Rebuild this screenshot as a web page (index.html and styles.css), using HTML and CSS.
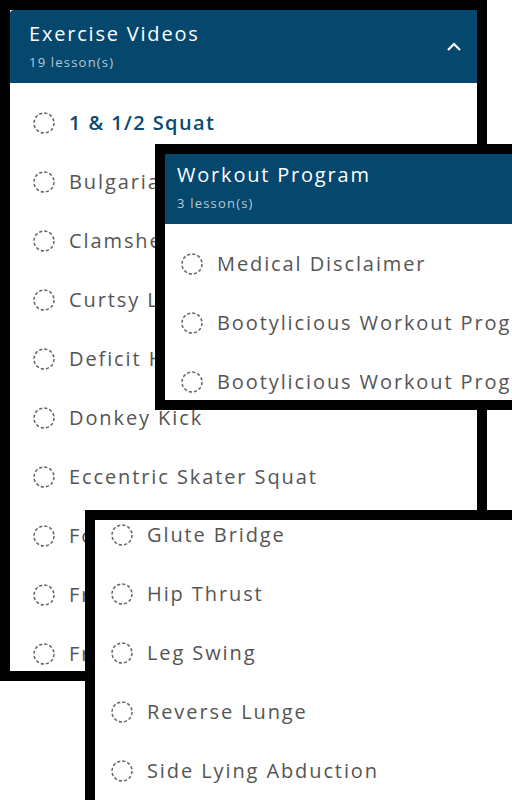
FILE: index.html
```html
<!DOCTYPE html>
<html lang="en">
<head>
    <meta charset="UTF-8">
    <meta name="viewport" content="width=device-width, initial-scale=1.0">
    <title>Course Lessons</title>
    <link rel="stylesheet" href="styles.css">
</head>
<body>
    <div class="desk">
        <!-- first capture: the exercise videos section -->
        <section class="shot shot-videos">
            <div class="course">
                <div class="course-head">
                    <div>
                        <h2>Exercise Videos</h2>
                        <p>19 lesson(s)</p>
                    </div>
                    <svg class="chevron" width="16" height="10" viewBox="0 0 16 10">
                        <path d="M2 8 L8 2 L14 8" fill="none" stroke="#fff" stroke-width="2.2"/>
                    </svg>
                </div>
                <ul class="lessons">
                    <li class="current"><svg class="dot" viewBox="0 0 22 22"><circle cx="11" cy="11" r="10"/></svg>1 &amp; 1/2 Squat</li>
                    <li><svg class="dot" viewBox="0 0 22 22"><circle cx="11" cy="11" r="10"/></svg>Bulgarian Split Squat</li>
                    <li><svg class="dot" viewBox="0 0 22 22"><circle cx="11" cy="11" r="10"/></svg>Clamshell</li>
                    <li><svg class="dot" viewBox="0 0 22 22"><circle cx="11" cy="11" r="10"/></svg>Curtsy Lunge</li>
                    <li><svg class="dot" viewBox="0 0 22 22"><circle cx="11" cy="11" r="10"/></svg>Deficit Hip Thrust</li>
                    <li><svg class="dot" viewBox="0 0 22 22"><circle cx="11" cy="11" r="10"/></svg>Donkey Kick</li>
                    <li><svg class="dot" viewBox="0 0 22 22"><circle cx="11" cy="11" r="10"/></svg>Eccentric Skater Squat</li>
                    <li><svg class="dot" viewBox="0 0 22 22"><circle cx="11" cy="11" r="10"/></svg>Foot Elevated Bridge</li>
                    <li><svg class="dot" viewBox="0 0 22 22"><circle cx="11" cy="11" r="10"/></svg>Frog Pump</li>
                    <li><svg class="dot" viewBox="0 0 22 22"><circle cx="11" cy="11" r="10"/></svg>Frog Squat</li>
                </ul>
            </div>
        </section>

        <!-- second capture: workout program section -->
        <section class="shot shot-program">
            <div class="course">
                <div class="course-head">
                    <div>
                        <h2>Workout Program</h2>
                        <p>3 lesson(s)</p>
                    </div>
                </div>
                <ul class="lessons">
                    <li><svg class="dot" viewBox="0 0 22 22"><circle cx="11" cy="11" r="10"/></svg>Medical Disclaimer</li>
                    <li><svg class="dot" viewBox="0 0 22 22"><circle cx="11" cy="11" r="10"/></svg>Bootylicious Workout Program</li>
                    <li><svg class="dot" viewBox="0 0 22 22"><circle cx="11" cy="11" r="10"/></svg>Bootylicious Workout Program</li>
                </ul>
            </div>
        </section>

        <!-- third capture: rest of the exercise list, scrolled -->
        <section class="shot shot-more">
            <div class="course">
                <ul class="lessons">
                    <li><svg class="dot" viewBox="0 0 22 22"><circle cx="11" cy="11" r="10"/></svg>Glute Bridge</li>
                    <li><svg class="dot" viewBox="0 0 22 22"><circle cx="11" cy="11" r="10"/></svg>Hip Thrust</li>
                    <li><svg class="dot" viewBox="0 0 22 22"><circle cx="11" cy="11" r="10"/></svg>Leg Swing</li>
                    <li><svg class="dot" viewBox="0 0 22 22"><circle cx="11" cy="11" r="10"/></svg>Reverse Lunge</li>
                    <li><svg class="dot" viewBox="0 0 22 22"><circle cx="11" cy="11" r="10"/></svg>Side Lying Abduction</li>
                </ul>
            </div>
        </section>
    </div>
</body>
</html>
```

FILE: styles.css
```css
body {
    margin: 0;
    background: #fff;
    font-family: "Open Sans", Arial, sans-serif;
    overflow: hidden;
}

.desk {
    position: relative;
    width: 512px;
    height: 800px;
    overflow: hidden;
}

.shot {
    position: absolute;
    box-sizing: border-box;
    border: 10px solid #000;
    background: #fff;
    overflow: hidden;
}

.shot-videos {
    left: 0;
    top: 0;
    width: 487px;
    height: 681px;
}

.shot-program {
    left: 155px;
    top: 144px;
    width: 420px;
    height: 266px;
}

.shot-more {
    left: 85px;
    top: 510px;
    width: 480px;
    height: 340px;
}

.shot-program .course {
    margin: -3px 0 0 -7px;
}

.shot-more .course {
    margin: -15px 0 0 -7px;
}

.course-head {
    display: flex;
    justify-content: space-between;
    align-items: center;
    height: 73px;
    box-sizing: border-box;
    padding: 0 15px 0 19px;
    background: #05476d;
    border-top-left-radius: 4px;
    color: #fff;
}

.course-head h2 {
    margin: 0;
    font-size: 20px;
    font-weight: 400;
    line-height: 24px;
    letter-spacing: 1.8px;
}

.course-head p {
    margin: 7px 0 0;
    font-size: 13px;
    line-height: 18px;
    letter-spacing: 1.2px;
    color: #b9c9d6;
}

.chevron {
    margin-top: 1px;
}

.lessons {
    list-style: none;
    margin: 0;
    padding: 10px 0;
}

.shot-more .lessons {
    padding-top: 0;
}

.lessons li {
    display: flex;
    align-items: center;
    gap: 14px;
    height: 59px;
    padding-left: 23px;
    font-size: 20px;
    letter-spacing: 1.9px;
    color: #555;
    white-space: nowrap;
}

.lessons li.current {
    color: #0b4a6e;
    font-weight: 600;
    letter-spacing: 1.4px;
}

.dot {
    width: 22px;
    height: 22px;
    flex: none;
}

.dot circle {
    fill: none;
    stroke: #666;
    stroke-width: 1.5;
    stroke-dasharray: 3.2 2.03;
}
```
